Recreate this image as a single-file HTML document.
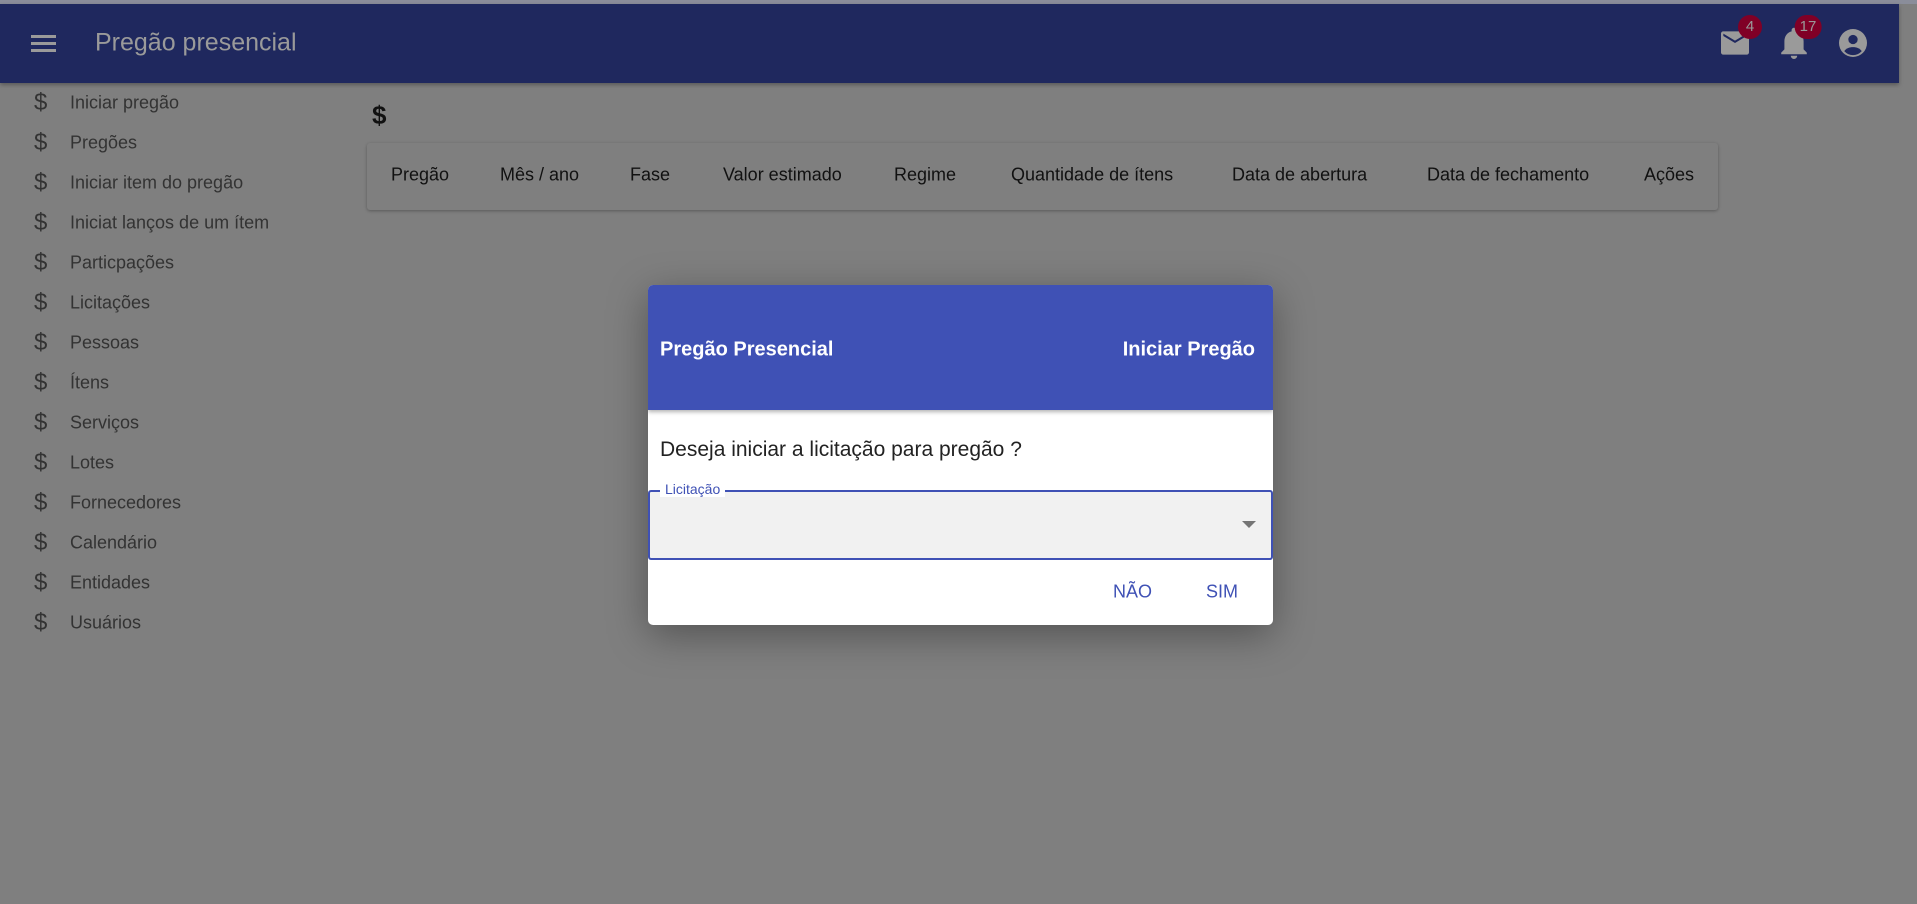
<!DOCTYPE html>
<html><head><meta charset="utf-8"><style>
*{margin:0;padding:0;box-sizing:border-box}
body{width:1917px;height:904px;background:#7f7f7f;font-family:"Liberation Sans",sans-serif;position:relative;overflow:hidden}
.top{position:absolute;left:0;top:0;width:1917px;height:4px;background:#8a8d9a}
.bar{position:absolute;left:0;top:4px;width:1899px;height:79px;background:#1f285e;box-shadow:0 2px 4px rgba(0,0,0,.3)}
.title{position:absolute;left:95px;top:39px;transform:translateY(-50%);color:#9a9a9a;font-size:25px}
.abs{position:absolute}
.item{position:absolute;left:0;height:40px;width:300px}
.item .d{position:absolute;left:34px;top:50%;transform:translateY(-50%);font-size:24px;color:#333}
.item .t{position:absolute;left:70px;top:50%;transform:translateY(-50%);color:#333;font-size:18px;white-space:nowrap}
.card{position:absolute;left:367px;top:143px;width:1351px;height:67px;background:#7f7f7f;box-shadow:0 1px 3px rgba(0,0,0,.3);border-radius:3px}
.h{position:absolute;top:175px;transform:translateY(-50%);font-size:18px;color:#111;white-space:nowrap}
.badge{position:absolute;height:24px;min-width:24px;border-radius:12px;background:#800026;color:#999;font-size:15px;text-align:center;line-height:24px;padding:0 5px;transform:translate(-50%,-50%)}
.dlg{position:absolute;left:648px;top:285px;width:625px;height:340px;background:#fff;border-radius:5px;box-shadow:0 10px 40px rgba(0,0,0,.35);overflow:hidden}
.dh{position:absolute;left:0;top:0;width:625px;height:125px;background:#3f51b5;color:#fff;font-size:20px;font-weight:bold;box-shadow:0 2px 4px rgba(0,0,0,.3)}
</style></head><body>
<div class="top"></div>
<div class="bar">
<svg class="abs" style="left:31px;top:30px" width="26" height="20" viewBox="0 0 26 20"><rect y="1" width="25" height="3" fill="#9a9a9a"/><rect y="8" width="25" height="3" fill="#9a9a9a"/><rect y="15" width="25" height="3" fill="#9a9a9a"/></svg>
<div class="title">Pregão presencial</div>
<svg class="abs" style="left:1721px;top:27px" width="28" height="24" viewBox="0 0 24 20"><path d="M22 0H2C.9 0 0 .9 0 2v16c0 1.1.9 2 2 2h20c1.1 0 2-.9 2-2V2c0-1.1-.9-2-2-2zm0 4l-10 6L2 4V2l10 6 10-6v2z" fill="#9a9a9a"/></svg>
<svg class="abs" style="left:1781px;top:23px" width="26" height="32" viewBox="0 0 16 20"><path d="M8 20c1.1 0 2-.9 2-2H6c0 1.1.9 2 2 2zm6-6V9c0-3.1-1.6-5.6-4.5-6.3V2c0-.8-.7-1.5-1.5-1.5S6.5 1.2 6.5 2v.7C3.6 3.4 2 5.9 2 9v5l-2 2v1h16v-1l-2-2z" fill="#9a9a9a"/></svg>
<svg class="abs" style="left:1839px;top:25px" width="28" height="28" viewBox="0 0 24 24"><circle cx="12" cy="12" r="12" fill="#9a9a9a"/><circle cx="12" cy="9" r="4" fill="#1f285e"/><path d="M4.5 19c1.5-2.5 4.5-3.5 7.5-3.5s6 1 7.5 3.5a10 10 0 0 1-15 0z" fill="#1f285e"/></svg>
</div>
<div class="badge" style="left:1750px;top:27px">4</div>
<div class="badge" style="left:1808px;top:27px">17</div>

<div class="item" style="top:83px"><span class="d">$</span><span class="t">Iniciar pregão</span></div>
<div class="item" style="top:123px"><span class="d">$</span><span class="t">Pregões</span></div>
<div class="item" style="top:163px"><span class="d">$</span><span class="t">Iniciar item do pregão</span></div>
<div class="item" style="top:203px"><span class="d">$</span><span class="t">Iniciat lanços de um ítem</span></div>
<div class="item" style="top:243px"><span class="d">$</span><span class="t">Particpações</span></div>
<div class="item" style="top:283px"><span class="d">$</span><span class="t">Licitações</span></div>
<div class="item" style="top:323px"><span class="d">$</span><span class="t">Pessoas</span></div>
<div class="item" style="top:363px"><span class="d">$</span><span class="t">Ítens</span></div>
<div class="item" style="top:403px"><span class="d">$</span><span class="t">Serviços</span></div>
<div class="item" style="top:443px"><span class="d">$</span><span class="t">Lotes</span></div>
<div class="item" style="top:483px"><span class="d">$</span><span class="t">Fornecedores</span></div>
<div class="item" style="top:523px"><span class="d">$</span><span class="t">Calendário</span></div>
<div class="item" style="top:563px"><span class="d">$</span><span class="t">Entidades</span></div>
<div class="item" style="top:603px"><span class="d">$</span><span class="t">Usuários</span></div>

<div class="abs" style="left:372px;top:100px;font-size:26px;font-weight:bold;color:#111">$</div>
<div class="card"></div>
<div class="h" style="left:391px">Pregão</div>
<div class="h" style="left:500px">Mês / ano</div>
<div class="h" style="left:630px">Fase</div>
<div class="h" style="left:723px">Valor estimado</div>
<div class="h" style="left:894px">Regime</div>
<div class="h" style="left:1011px">Quantidade de ítens</div>
<div class="h" style="left:1232px">Data de abertura</div>
<div class="h" style="left:1427px">Data de fechamento</div>
<div class="h" style="left:1644px">Ações</div>

<div class="dlg">
<div class="dh"><span class="abs" style="left:12px;top:65px;transform:translateY(-50%)">Pregão Presencial</span><span class="abs" style="right:18px;top:65px;transform:translateY(-50%)">Iniciar Pregão</span></div>
<div class="abs" style="left:12px;top:165px;transform:translateY(-50%);font-size:21px;color:#222">Deseja iniciar a licitação para pregão ?</div>
<div class="abs" style="left:0;top:205px;width:625px;height:70px;background:#f1f1f1;border:2px solid #3f51b5;border-radius:3px"></div>
<div class="abs" style="left:12px;top:196px;padding:0 5px;background:#fff;font-size:14px;color:#3f51b5;line-height:16px">Licitação</div>
<svg class="abs" style="left:594px;top:236px" width="14" height="8"><path d="M0 0h14L7 7z" fill="#757575"/></svg>
<div class="abs" style="left:465px;top:307px;transform:translateY(-50%);font-size:18px;color:#3f51b5">NÃO</div>
<div class="abs" style="left:558px;top:307px;transform:translateY(-50%);font-size:18px;color:#3f51b5">SIM</div>
</div>
</body></html>
